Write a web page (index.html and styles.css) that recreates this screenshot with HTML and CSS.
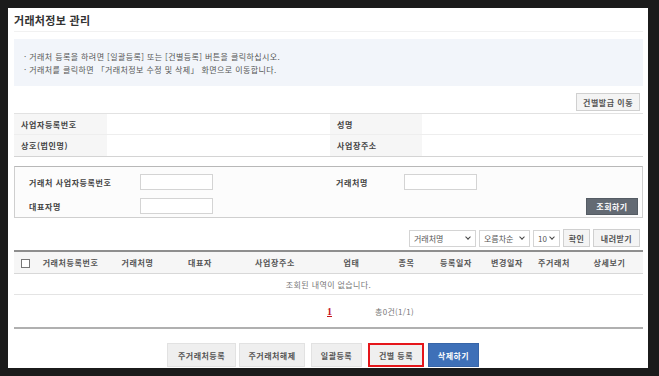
FILE: index.html
```html
<!DOCTYPE html>
<html lang="ko">
<head>
<meta charset="UTF-8" />
<title>거래처정보 관리</title>
<link rel="stylesheet" href="styles.css">
</head>
<body>
  <div class="panel">
    <h1 class="title">거래처정보 관리</h1>

    <div class="notice">
      <p>· 거래처 등록을 하려면 [일괄등록] 또는 [건별등록] 버튼을 클릭하십시오.</p>
      <p>· 거래처를 클릭하면 「거래처정보 수정 및 삭제」 화면으로 이동합니다.</p>
    </div>

    <div class="top-actions">
      <button class="btn">건별발급 이동</button>
    </div>

    <div class="info">
      <div class="info-label">사업자등록번호</div>
      <div class="info-value"></div>
      <div class="info-label">성명</div>
      <div class="info-value"></div>
      <div class="info-label">상호(법인명)</div>
      <div class="info-value"></div>
      <div class="info-label">사업장주소</div>
      <div class="info-value"></div>
    </div>

    <div class="search">
      <label>거래처 사업자등록번호</label>
      <input type="text" />
      <span></span>
      <label>거래처명</label>
      <input type="text" />
      <span></span>
      <label>대표자명</label>
      <input type="text" />
      <span></span>
      <span></span>
      <span></span>
      <button class="btn btn-dark">조회하기</button>
    </div>

    <div class="toolbar">
      <span class="sel-wrap sel-name"><select class="sel"><option>거래처명</option></select></span>
      <span class="sel-wrap sel-order"><select class="sel"><option>오름차순</option></select></span>
      <span class="sel-wrap sel-count"><select class="sel"><option>10</option></select></span>
      <button class="btn btn-ok">확인</button>
      <button class="btn btn-down">내려받기</button>
    </div>

    <table class="list">
      <colgroup>
        <col style="width:22px"><col style="width:69px"><col style="width:65px"><col style="width:60px">
        <col style="width:90px"><col style="width:63px"><col style="width:47px"><col style="width:52px">
        <col style="width:50px"><col style="width:44px"><col>
      </colgroup>
      <thead>
        <tr>
          <th><span class="check"></span></th>
          <th>거래처등록번호</th>
          <th>거래처명</th>
          <th>대표자</th>
          <th>사업장주소</th>
          <th>업태</th>
          <th>종목</th>
          <th>등록일자</th>
          <th>변경일자</th>
          <th>주거래처</th>
          <th>상세보기</th>
        </tr>
      </thead>
      <tbody>
        <tr><td colspan="11" class="empty">조회된 내역이 없습니다.</td></tr>
      </tbody>
    </table>

    <div class="pager">
      <a class="page">1</a>
      <span class="total">총0건(1/1)</span>
    </div>

    <div class="bottom-actions">
      <button class="btn btn-lg w-reg">주거래처등록</button>
      <button class="btn btn-lg w-off">주거래처해제</button>
      <button class="btn btn-lg w-bulk">일괄등록</button>
      <button class="btn btn-lg btn-mark">건별 등록</button>
      <button class="btn btn-lg btn-blue">삭제하기</button>
    </div>
  </div>
</body>
</html>
```

FILE: styles.css
```css
body {
  margin: 0;
  background: #1b1b1b;
  font-family: "Noto Sans CJK KR", "Noto Sans", sans-serif;
  color: #555;
}
.panel {
  width: 629px;
  height: 360px;
  margin: 8px 0 0 8px;
  padding: 0 5px 0 6px;
  background: #fff;
  overflow: hidden;
}
.title {
  margin: 0;
  height: 22px;
  padding-top: 1px;
  font-size: 11px;
  line-height: 22px;
  font-weight: bold;
  letter-spacing: 0.3px;
  color: #333;
  border-bottom: 1px solid #f1f1f1;
}
.notice {
  margin-top: 7px;
  height: 47px;
  box-sizing: border-box;
  padding: 11px 10px 0;
  background: #f2f5fa;
}
.notice p {
  margin: 0;
  font-size: 8px;
  line-height: 13px;
  letter-spacing: 0.4px;
  color: #555;
}
.top-actions {
  margin-top: 7px;
  display: flex;
  justify-content: flex-end;
  padding-right: 3px;
}
.btn {
  height: 18px;
  padding: 0 6px;
  border: 1px solid #d0d0d0;
  background: #f4f4f4;
  color: #555;
  font-family: inherit;
  font-size: 8px;
  font-weight: bold;
  letter-spacing: 0.5px;
  cursor: pointer;
}
.info {
  margin-top: 2px;
  display: grid;
  grid-template-columns: 93px 223px 92px 1fr;
  grid-auto-rows: 21px;
  border-top: 1px solid #e2e2e2;
  border-bottom: 1px solid #d4d4d4;
}
.info > div {
  font-size: 8px;
  line-height: 21px;
  letter-spacing: 0.6px;
  border-bottom: 1px solid #eee;
}
.info > div:nth-last-child(-n+4) { border-bottom: none; }
.info-label {
  background: #f6f6f6;
  padding-left: 7px;
  font-weight: bold;
  color: #444;
}
.search {
  margin-top: 9px;
  height: 52px;
  box-sizing: border-box;
  padding: 7px 4px 0 14px;
  display: grid;
  grid-template-columns: 111px 73px 123px 68px 73px 1fr;
  grid-template-rows: 16px 16px;
  row-gap: 8px;
  align-items: center;
  border: 1px solid #cfcfcf;
  border-top-color: #b8b8b8;
  background: #fcfcfc;
}
.search label {
  font-size: 8px;
  font-weight: bold;
  letter-spacing: 0.6px;
  color: #444;
}
.search input {
  width: 73px;
  height: 16px;
  box-sizing: border-box;
  border: 1px solid #d4d4d4;
  background: #fff;
  margin: 0;
}
.btn-dark {
  justify-self: end;
  height: 17px;
  width: 52px;
  padding: 0;
  border: 1px solid #555c64;
  background: #636a73;
  color: #fff;
}
.toolbar {
  margin-top: 11px;
  display: flex;
  justify-content: flex-end;
  align-items: center;
  gap: 3px;
  padding-right: 3px;
  height: 18px;
}
.sel-wrap {
  position: relative;
  display: block;
  height: 17px;
}
.sel-wrap::after {
  content: "";
  position: absolute;
  right: 6px;
  top: 5px;
  width: 3px;
  height: 3px;
  border-right: 1.5px solid #444;
  border-bottom: 1.5px solid #444;
  transform: rotate(45deg);
  pointer-events: none;
}
.sel {
  -webkit-appearance: none;
  appearance: none;
  display: block;
  width: 100%;
  height: 17px;
  box-sizing: border-box;
  margin: 0;
  border: 1px solid #d4d4d4;
  border-radius: 0;
  background: #fff;
  color: #555;
  font-family: inherit;
  font-size: 8px;
  line-height: 15px;
  padding: 0 0 0 4px;
}
.sel-name { width: 67px; }
.sel-order { width: 51px; }
.sel-count { width: 27px; }
.toolbar .btn { height: 18px; padding: 0; }
.btn-ok { width: 27px; }
.btn-down { width: 47px; }
.list {
  margin-top: 3px;
  width: 100%;
  border-collapse: collapse;
  table-layout: fixed;
  border-top: 2px solid #8e8e8e;
}
.list th {
  height: 21px;
  padding: 0;
  background: #f6f6f6;
  font-size: 8px;
  font-weight: bold;
  letter-spacing: 0.6px;
  color: #555;
  border-bottom: 1px solid #d8d8d8;
  white-space: nowrap;
}
.check {
  display: inline-block;
  width: 7px;
  height: 7px;
  border: 1px solid #777;
  background: #fff;
  vertical-align: middle;
}
.list td {
  height: 20px;
  padding: 0;
  border-bottom: 1px solid #e4e4e4;
}
.empty {
  text-align: center;
  font-size: 8px;
  letter-spacing: 0.4px;
  color: #777;
}
.pager {
  height: 32px;
  display: flex;
  align-items: center;
  padding-left: 313px;
  gap: 43px;
  border-bottom: 2px solid #b0b0b0;
}
.page {
  color: #c4161c;
  font-family: "Liberation Serif", serif;
  font-size: 10px;
  font-weight: bold;
  text-decoration: underline;
}
.total {
  font-size: 8px;
  color: #777;
  letter-spacing: 0.3px;
}
.bottom-actions {
  margin-top: 14px;
  display: flex;
  padding-left: 153px;
}
.btn-lg {
  height: 24px;
  padding: 0;
  border: 1px solid #e2e2e2;
  background: #efefef;
}
.w-reg { width: 69px; }
.w-off { width: 66px; margin-left: 3px; }
.w-bulk { width: 51px; margin-left: 6px; }
.btn-mark {
  width: 56px;
  margin-left: 6px;
  border: 2px solid #e5161b;
}
.btn-blue {
  width: 51px;
  margin-left: 4px;
  border: 1px solid #3765a8;
  background: #3e70b8;
  color: #fff;
}
```
